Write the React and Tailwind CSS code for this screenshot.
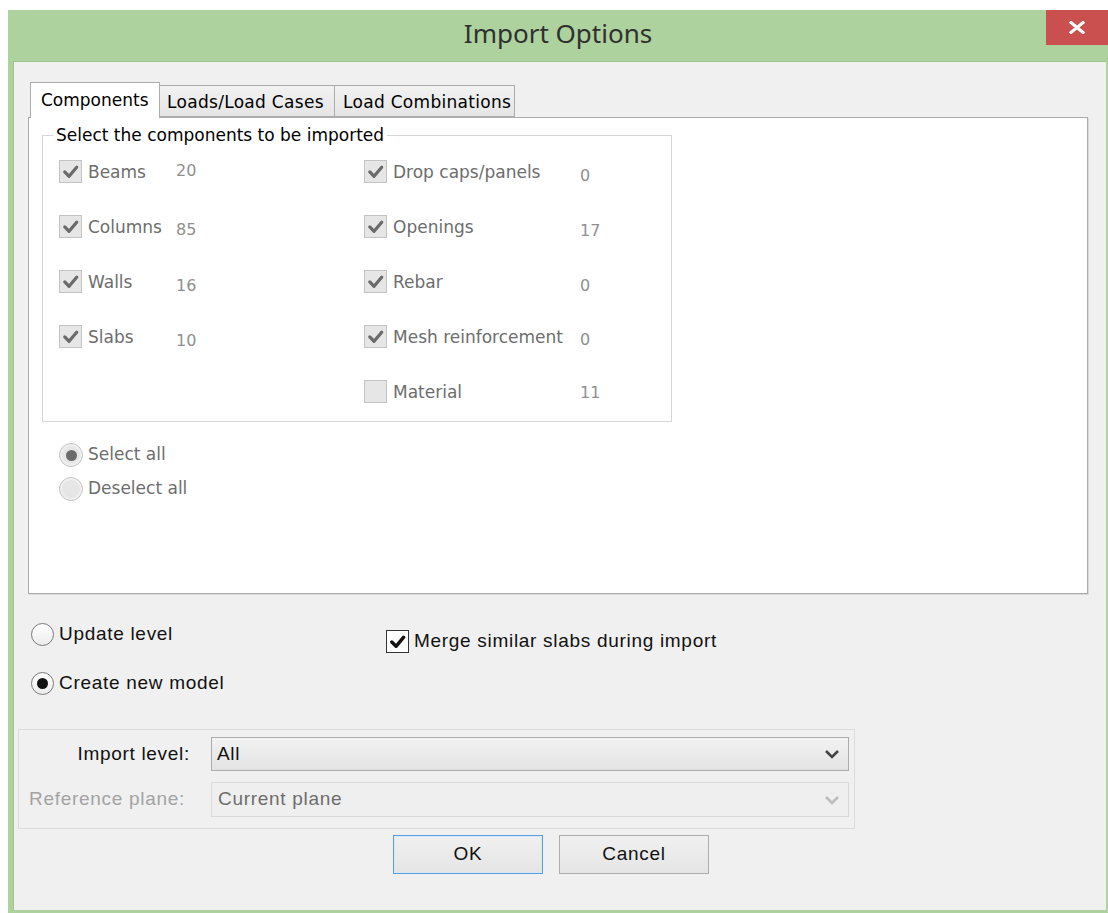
import React from "react";

const leftItems = [
  { label: "Beams", count: "20", nudge: "pb-[2px]" },
  { label: "Columns", count: "85", nudge: "pt-[6px]" },
  { label: "Walls", count: "16", nudge: "pt-[8px]" },
  { label: "Slabs", count: "10", nudge: "pt-[8px]" },
];

const rightItems = [
  { label: "Drop caps/panels", count: "0", nudge: "pt-[8px]" },
  { label: "Openings", count: "17", nudge: "pt-[8px]" },
  { label: "Rebar", count: "0", nudge: "pt-[8px]" },
  { label: "Mesh reinforcement", count: "0", nudge: "pt-[6px]" },
  { label: "Material", count: "11", nudge: "pt-[2px]", off: true },
];

function Tick({ color, width = 3.4 }) {
  return (
    <svg viewBox="0 0 22 22" className="w-full h-full">
      <polyline points="5,11.5 9.5,16 17.5,6.5" fill="none" stroke={color} strokeWidth={width} strokeLinecap="round" strokeLinejoin="round" />
    </svg>
  );
}

// greyed-out checkbox row used inside the components group
function ComponentRow({ item, labelWidth }) {
  return (
    <div className="h-[55px] flex items-center">
      <span className="w-[23px] h-[23px] shrink-0 border border-[#c3c3c3] bg-[#e6e6e6]">
        {!item.off && <Tick color="#6b6b6b" />}
      </span>
      <span className={`ml-[6px] ${labelWidth} text-[17px] text-[#6d6d6d] leading-none pt-[2px]`}>{item.label}</span>
      <span className={`text-[16px] text-[#8f8f8f] leading-none ${item.nudge}`}>{item.count}</span>
    </div>
  );
}

function GreyRadio({ checked, label }) {
  return (
    <div className="h-[34px] flex items-center">
      <span className="w-[24px] h-[24px] rounded-full border border-[#c6c6c6] bg-[#e6e6e6] flex items-center justify-center shadow-[inset_0_0_0_2px_#efefef]">
        {checked && <span className="w-[11px] h-[11px] rounded-full bg-[#6b6b6b]" />}
      </span>
      <span className="ml-[5px] text-[17px] text-[#6d6d6d]">{label}</span>
    </div>
  );
}

function Radio({ checked, label }) {
  return (
    <div className="h-[49px] flex items-center">
      <span className="w-[23px] h-[23px] rounded-full border border-[#7a7a7a] bg-gradient-to-b from-[#ffffff] to-[#ececec] flex items-center justify-center">
        {checked && <span className="w-[11px] h-[11px] rounded-full bg-[#111]" />}
      </span>
      <span className="ml-[5px] text-[19px] tracking-[0.7px] text-[#111]">{label}</span>
    </div>
  );
}

function Chevron({ color }) {
  return (
    <svg viewBox="0 0 16 10" className="w-[16px] h-[10px]">
      <polyline points="2,2 8,8 14,2" fill="none" stroke={color} strokeWidth="2.6" />
    </svg>
  );
}

export default function App() {
  return (
    <div className="w-[1108px] h-[913px] bg-white pt-[10px] pl-[8px] overflow-hidden">
      <div className="w-[1100px] h-[903px] bg-[#aed29e] flex flex-col">
        {/* title bar */}
        <div className="h-[51px] grid grid-cols-[62px_1fr_62px] shrink-0">
          <div />
          <div className="flex items-center justify-center text-[26px] text-[#303030] pb-[4px]" style={{ fontFamily: '"Noto Sans", sans-serif' }}>
            Import Options
          </div>
          <div className="h-[35px] bg-[#c9504f] flex items-center justify-center">
            <svg viewBox="0 0 18 13" className="w-[18px] h-[13px]">
              <path d="M3 1.5 L15 11.5 M15 1.5 L3 11.5" stroke="#fff" strokeWidth="3" strokeLinecap="square" />
            </svg>
          </div>
        </div>

        <div className="flex-1 ml-[5px] mr-[2px] mb-[3px] bg-[#f0f0f0] border-l border-t border-[#9fc48e] flex flex-col">
          {/* tabs */}
          <div className="pt-[20px] flex items-end ml-[16px] text-[17px] text-black" style={{ fontFamily: '"DejaVu Sans", sans-serif' }}>
            <div className="w-[130px] h-[36px] bg-white border border-b-0 border-[#acacac] -mb-px relative z-10 pl-[10px] flex items-center">
              Components
            </div>
            <div className="w-[175px] h-[32px] bg-gradient-to-b from-[#f2f2f2] to-[#e5e5e5] border border-l-0 border-[#acacac] pl-[7px] pt-[3px] flex items-center tracking-[0.3px]">
              Loads/Load Cases
            </div>
            <div className="w-[180px] h-[32px] bg-gradient-to-b from-[#f2f2f2] to-[#e5e5e5] border border-l-0 border-[#acacac] pl-[8px] pt-[3px] flex items-center tracking-[0.3px]">
              Load Combinations
            </div>
          </div>

          {/* tab page */}
          <div className="ml-[14px] w-[1060px] h-[477px] bg-white border border-[#acacac] shadow-[1px_1px_0_#d9d9d9] pt-[7px]" style={{ fontFamily: '"DejaVu Sans", sans-serif' }}>
            <fieldset className="ml-[13px] w-[630px] h-[297px] border border-[#d6d6d6] p-0 m-0 min-w-0">
              <legend className="ml-[10px] px-[3px] text-[17px] leading-[20px] text-black">Select the components to be imported</legend>
              <div className="flex pl-[16px] -mt-[1px]">
                <div className="w-[305px] flex flex-col">
                  {leftItems.map((item) => (
                    <ComponentRow key={item.label} item={item} labelWidth="w-[88px]" />
                  ))}
                </div>
                <div className="flex flex-col">
                  {rightItems.map((item) => (
                    <ComponentRow key={item.label} item={item} labelWidth="w-[187px]" />
                  ))}
                </div>
              </div>
            </fieldset>
            <div className="ml-[30px] mt-[16px]">
              <GreyRadio checked label="Select all" />
              <GreyRadio label="Deselect all" />
            </div>
          </div>

          {/* import mode */}
          <div className="flex mt-[16px]" style={{ fontFamily: '"Liberation Sans", Arial, sans-serif' }}>
            <div className="w-[355px] ml-[17px]">
              <Radio label="Update level" />
              <Radio checked label="Create new model" />
            </div>
            <div className="mt-[19px] h-[24px] flex items-center self-start">
              <span className="w-[23px] h-[23px] border border-[#333] bg-white">
                <Tick color="#111" width={3.6} />
              </span>
              <span className="ml-[5px] text-[19px] tracking-[0.7px] text-[#111]">Merge similar slabs during import</span>
            </div>
          </div>

          {/* level options */}
          <div className="ml-[4px] mt-[21px] w-[837px] h-[100px] border border-[#dcdcdc] pt-[7px] flex flex-col gap-[11px] text-[19px] tracking-[0.7px]" style={{ fontFamily: '"Liberation Sans", Arial, sans-serif' }}>
            <div className="flex items-center">
              <span className="w-[171px] text-right text-[#111]">Import level:</span>
              <div className="ml-[21px] w-[638px] h-[34px] border border-[#acacac] bg-gradient-to-b from-[#f2f2f2] to-[#e3e3e3] flex items-center justify-between pl-[5px] pr-[8px]">
                <span className="text-[#111]">All</span>
                <Chevron color="#444" />
              </div>
            </div>
            <div className="flex items-center">
              <span className="w-[166px] text-right text-[#a3a3a3]">Reference plane:</span>
              <div className="ml-[26px] w-[638px] h-[35px] border border-[#d9d9d9] bg-[#efefef] flex items-center justify-between pl-[6px] pr-[8px]">
                <span className="text-[#6d6d6d]">Current plane</span>
                <Chevron color="#bdbdbd" />
              </div>
            </div>
          </div>

          {/* dialog buttons */}
          <div className="ml-[379px] mt-[6px] flex gap-[16px] text-[19px] tracking-[0.7px] text-[#111]" style={{ fontFamily: '"Liberation Sans", Arial, sans-serif' }}>
            <button className="w-[150px] h-[39px] border border-[#5a9fdc] bg-gradient-to-b from-[#f0f0f0] to-[#e5e5e5] shadow-[inset_0_0_0_1px_#d6e9fb]">OK</button>
            <button className="w-[150px] h-[39px] border border-[#adadad] bg-gradient-to-b from-[#f0f0f0] to-[#e5e5e5]">Cancel</button>
          </div>
        </div>
      </div>
    </div>
  );
}
